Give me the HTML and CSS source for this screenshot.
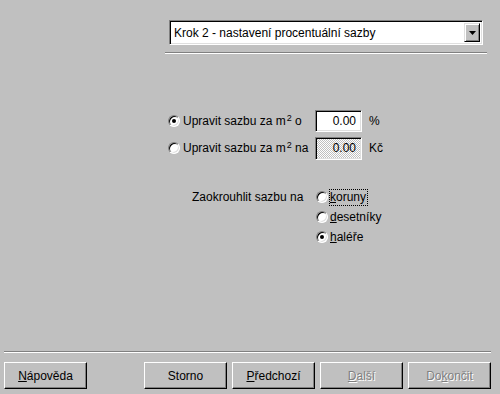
FILE: index.html
```
<!DOCTYPE html>
<html>
<head>
<meta charset="utf-8">
<title>Průvodce - Krok 2</title>
<link rel="stylesheet" href="styles.css">
</head>
<body>
<div class="wizard">

<div class="top">
  <div class="combo">
    <span class="combo-text">Krok 2 - nastavení procentuální sazby</span>
    <span class="combo-btn"><svg width="7" height="4" viewBox="0 0 7 4"><path d="M0 0h7l-3.5 4z" fill="#000"/></svg></span>
  </div>
  <div class="rule"></div>
</div>

<div class="rates">
  <div class="rate-row">
    <span class="radio checked"></span>
    <span class="rate-label">Upravit sazbu za m<sup>2</sup> o</span>
    <span class="field">0.00</span>
    <span class="unit">%</span>
  </div>
  <div class="rate-row">
    <span class="radio"></span>
    <span class="rate-label">Upravit sazbu za m<sup>2</sup> na</span>
    <span class="field dotted">0.00</span>
    <span class="unit">Kč</span>
  </div>
</div>

<div class="rounding">
  <span class="round-label">Zaokrouhlit sazbu na</span>
  <div class="round-list">
    <div class="round-row"><span class="radio"></span><span class="focus"><u>k</u>oruny</span></div>
    <div class="round-row"><span class="radio"></span><span><u>d</u>esetníky</span></div>
    <div class="round-row"><span class="radio checked"></span><span><u>h</u>aléře</span></div>
  </div>
</div>

<div class="footer">
  <div class="rule wide"></div>
  <div class="buttons">
    <span class="btn help"><u>N</u>ápověda</span>
    <span class="btn">Storno</span>
    <span class="btn"><u>P</u>ředchozí</span>
    <span class="btn disabled"><u>D</u>alší</span>
    <span class="btn disabled">Do<u>k</u>ončit</span>
  </div>
</div>

</div>
</body>
</html>
```

FILE: styles.css
```
/* Wizard dialog, classic 3D look */

body
{ margin: 0;
background: #c0c0c0;
font-family: "Liberation Sans", Arial, sans-serif;
font-size: 12px;
color: #000;
}

u
{ text-decoration: underline;
text-underline-offset: 1px;
}

div.wizard
{ width: 500px;
height: 394px;
display: flex;
flex-direction: column;
}

/* Step selector */

div.top
{ padding: 20px 0 0 165px;
width: 322px;
}

div.combo
{ margin-left: 4px;
width: 314px;
height: 25px;
box-sizing: border-box;
display: flex;
align-items: center;
background: #fff;
border: 1px solid;
border-color: #808080 #fff #fff #808080;
box-shadow: inset 1px 1px #000, inset -1px -1px #dfdfdf;
padding: 2px;
}

span.combo-text
{ flex: 1;
padding-left: 2px;
}

span.combo-btn
{ width: 16px;
height: 19px;
box-sizing: border-box;
display: flex;
align-items: center;
justify-content: center;
background: #c0c0c0;
border: 1px solid;
border-color: #dfdfdf #000 #000 #dfdfdf;
box-shadow: inset 1px 1px #fff, inset -1px -1px #808080;
}

div.rule
{ margin-top: 7px;
height: 0;
border-top: 1px solid #808080;
border-bottom: 1px solid #fff;
}

div.rule.wide
{ margin: 0 9px 0 4px;
}

/* Radio buttons */

span.radio
{ width: 12px;
height: 12px;
flex: none;
border-radius: 50%;
box-sizing: border-box;
background: #fff;
border: 1px solid;
border-color: #808080 #fff #fff #808080;
box-shadow: inset 1px 1px #000, inset -1px -1px #dfdfdf;
position: relative;
}

span.radio.checked::after
{ content: "";
position: absolute;
left: 3px;
top: 3px;
width: 4px;
height: 4px;
border-radius: 50%;
background: #000;
}

/* Rate rows */

div.rates
{ margin-top: 56px;
padding-left: 168px;
display: flex;
flex-direction: column;
gap: 5px;
}

div.rate-row
{ height: 22px;
display: flex;
align-items: center;
}

span.rate-label
{ width: 132px;
margin-left: 3px;
}

sup
{ font-size: 9px;
vertical-align: 4px;
line-height: 0;
margin-left: 1px;
}

span.field
{ width: 47px;
height: 22px;
box-sizing: border-box;
background: #fff;
border: 1px solid;
border-color: #808080 #fff #fff #808080;
box-shadow: inset 1px 1px #000, inset -1px -1px #dfdfdf;
text-align: right;
padding: 3px 5px 0 0;
}

span.field.dotted
{ height: 23px;
background: repeating-conic-gradient(#fff 0 25%, #c0c0c0 0 50%) 0 0 / 2px 2px;
}

span.unit
{ margin-left: 7px;
}

/* Rounding */

div.rounding
{ margin-top: 28px;
padding-left: 192px;
display: flex;
}

span.round-label
{ width: 124px;
height: 20px;
line-height: 20px;
}

div.round-row
{ height: 20px;
display: flex;
align-items: center;
gap: 2px;
}

span.focus
{ outline: 1px dotted #000;
padding: 0 1px 1px 0;
}

/* Footer buttons */

div.footer
{ margin-top: auto;
padding-bottom: 5px;
}

div.buttons
{ margin-top: 9px;
padding: 0 9px 0 4px;
display: flex;
gap: 5px;
}

span.btn
{ width: 83px;
height: 27px;
box-sizing: border-box;
display: flex;
align-items: center;
justify-content: center;
border: 1px solid;
border-color: #fff #000 #000 #fff;
box-shadow: inset -1px -1px #808080;
}

span.btn.help
{ margin-right: 52px;
}

span.btn.disabled
{ color: #808080;
text-shadow: 1px 1px #fff;
}
```
